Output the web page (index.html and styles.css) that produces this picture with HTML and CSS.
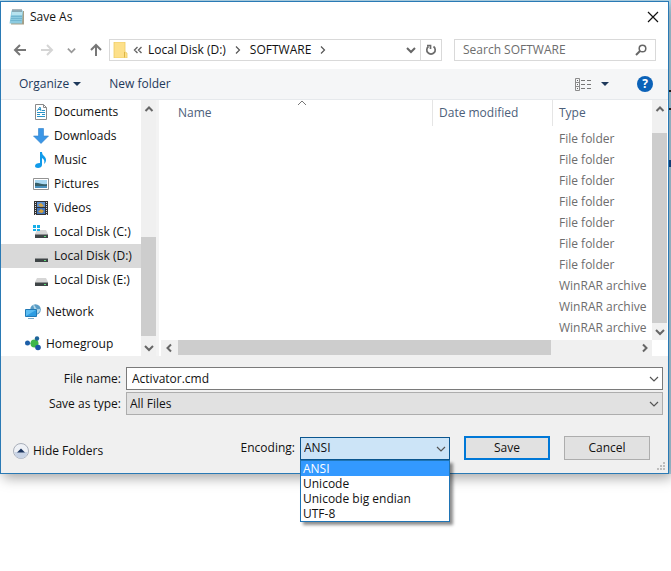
FILE: index.html
```html
<!DOCTYPE html>
<html lang="en">
<head>
    <meta charset="UTF-8">
    <meta name="viewport" content="width=device-width, initial-scale=1.0">
    <title>Save As</title>
    <link rel="stylesheet" href="styles.css">
</head>
<body>
    <!-- Shared glyphs -->
    <svg class="symbols" aria-hidden="true">
        <symbol id="chev-down" viewBox="0 0 10 10"><path d="M1 3l4 4 4-4"/></symbol>
        <symbol id="chev-up" viewBox="0 0 10 10"><path d="M1.500 7L5 3.500 8.500 7"/></symbol>
        <symbol id="chev-left" viewBox="0 0 10 10"><path d="M7 1.500L3.500 5 7 8.500"/></symbol>
        <symbol id="chev-right" viewBox="0 0 10 10"><path d="M3 1.500L6.500 5 3 8.500"/></symbol>
        <symbol id="drive" viewBox="0 0 16 16">
            <path d="M4 6h9l2 4H2z" fill="#d6d6d6"/>
            <path d="M2 10h13v4H2z" fill="#3f4547"/>
            <path d="M2 10h13v1H2z" fill="#8c8f90"/>
            <path d="M11 12h2v1h-2z" fill="#5fe07a"/>
        </symbol>
    </svg>

    <div class="desktop">
        <main class="dialog">
            <header class="titlebar">
                <svg class="icon" viewBox="0 0 16 16">
                    <path d="M3 2h12v13.500H2z" fill="#a59f87"/>
                    <path d="M2.500 1.500h11.500L13 14.500H.500z" fill="#8ccbe0"/>
                    <path d="M3 2h10.500l-.5 4H2.500z" fill="#b7e3ef"/>
                    <path d="M2 7.500h11M2 9.500h11M1.500 11.500h11" stroke="#66aec8" stroke-width=".7"/>
                    <path d="M4 0v3M6 0v3M8 0v3M10 0v3M12 0v3" stroke="#5b6f78"/>
                </svg>
                <h1>Save As</h1>
                <button class="close" aria-label="Close">
                    <svg viewBox="0 0 12 12"><path d="M1 1l10 10M11 1L1 11" stroke="#111" stroke-width="1.200"/></svg>
                </button>
            </header>

            <!-- Address row -->
            <nav class="address-row">
                <div class="nav-buttons">
                    <button aria-label="Back"><svg viewBox="0 0 14 14"><path d="M13 7H2M7 2L2 7l5 5" stroke="#777" stroke-width="2" fill="none"/></svg></button>
                    <button aria-label="Forward"><svg viewBox="0 0 14 14"><path d="M1 7h11M7 2l5 5-5 5" stroke="#d5d5d5" stroke-width="2" fill="none"/></svg></button>
                    <button class="recent" aria-label="Recent locations"><svg class="chev bold"><use href="#chev-down"/></svg></button>
                    <button aria-label="Up"><svg viewBox="0 0 14 14"><path d="M7 13V2M2 7l5-5 5 5" stroke="#777" stroke-width="2" fill="none"/></svg></button>
                </div>
                <div class="address">
                    <svg class="icon" viewBox="0 0 16 16">
                        <path d="M2 0h11v10l2 1v5H2z" fill="#fde08a" stroke="#eccb63" stroke-width=".8"/>
                        <path d="M12.500 10v5.500" stroke="#dcb545"/>
                    </svg>
                    <a class="more" href="#" aria-label="Parent folders"><svg viewBox="0 0 10 10"><path d="M4.500 2l-3 3 3 3M8.500 2l-3 3 3 3" fill="none" stroke="#666" stroke-width="1.400"/></svg></a>
                    <a href="#">Local Disk (D:)</a>
                    <svg class="chev"><use href="#chev-right"/></svg>
                    <a href="#">SOFTWARE</a>
                    <svg class="chev"><use href="#chev-right"/></svg>
                    <button class="history" aria-label="Previous locations"><svg class="chev bold"><use href="#chev-down"/></svg></button>
                    <button class="refresh" aria-label="Refresh">
                        <svg viewBox="0 0 12 12"><path d="M3.500 2.500A4.200 4.200 0 1 0 8.500 2.500M2 1.500h3.500V5" stroke="#6b6b6b" stroke-width="1.700" fill="none"/></svg>
                    </button>
                </div>
                <div class="search">
                    <input type="text" placeholder="Search SOFTWARE" aria-label="Search SOFTWARE">
                    <svg viewBox="0 0 12 12"><circle cx="7.500" cy="4.500" r="3.300" stroke="#666" stroke-width="1.500" fill="none"/><path d="M5 7l-4 4" stroke="#666" stroke-width="2"/></svg>
                </div>
            </nav>

            <div class="toolbar">
                <button>Organize <span class="caret"></span></button>
                <button>New folder</button>
                <button class="views" aria-label="Change your view">
                    <svg viewBox="0 0 17 13">
                        <path d="M.500.500h4v12h-4zM.500 4.500h4M.500 8.500h4" fill="none" stroke="#8b8b8b"/>
                        <path d="M2 2h1v1H2zM2 6h1v1H2zM2 10h1v1H2z" fill="#666"/>
                        <path d="M6 2.500h4M12 2.500h4M6 6.500h4M12 6.500h4M6 10.500h4M12 10.500h4" stroke="#777"/>
                    </svg>
                    <span class="caret"></span>
                </button>
                <button class="help" aria-label="Help">?</button>
            </div>

            <div class="panes">
                <aside class="sidebar">
                    <ul class="tree">
                        <li><a href="#">
                            <svg class="icon" viewBox="0 0 16 16"><path d="M2.500.500h8l3 3v12h-11z" fill="#fff" stroke="#8a8a8a"/><path d="M10.500.500v3h3" fill="none" stroke="#8a8a8a"/><path d="M4 7l3-4 1 4M5 5.500h3M4 8.500h8M4 10.500h3M9 10.500h3M4 12.500h8M9 6.500h3" stroke="#2a94c8" fill="none"/></svg>
                            Documents</a></li>
                        <li><a href="#">
                            <svg class="icon" viewBox="0 0 16 16"><path d="M5.500.500h5V8h5L8 15.500.500 8h5z" fill="#3b96e6" stroke="#2f7fca" stroke-width=".6"/></svg>
                            Downloads</a></li>
                        <li><a href="#">
                            <svg class="icon" viewBox="0 0 16 16"><path d="M7 0h2c0 4 4 4 4 8 0 2-1 3-2 4 1-3 0-5-2-6v7c0 2-2 3-4 3s-3-1-3-2c0-2 2-3 5-3z" fill="#119bea"/></svg>
                            Music</a></li>
                        <li><a href="#">
                            <svg class="icon" viewBox="0 0 16 16"><path d="M.500 2.500h15v11H.500z" fill="#fff" stroke="#939393"/><path d="M2 4h12v8H2z" fill="#a9d8f2"/><path d="M2 7c3-1 6 2 12 1v2H2z" fill="#37606a"/><path d="M2 10h12v2H2z" fill="#4b91bd"/></svg>
                            Pictures</a></li>
                        <li><a href="#">
                            <svg class="icon" viewBox="0 0 16 16"><path d="M1 1h14v14H1z" fill="#333"/><path d="M4 2h8v5H4z" fill="#5c8fd0"/><path d="M4 8h8v6H4z" fill="#4376bd"/><path d="M5 5l3-2 3 3-3 1zM5 12l3-3 3 2-2 2z" fill="#d5a23b"/><path d="M2.500 2v13M13.500 2v13" stroke="#ddd" stroke-dasharray="1 1"/></svg>
                            Videos</a></li>
                        <li><a href="#">
                            <svg class="icon" viewBox="0 0 16 16"><use href="#drive"/><path d="M0 1h3v3H0zM4 1h3v3H4zM0 5h3v2H0zM4 5h3v2H4z" fill="#16aee8"/></svg>
                            Local Disk (C:)</a></li>
                        <li class="selected"><a href="#"><svg class="icon"><use href="#drive"/></svg> Local Disk (D:)</a></li>
                        <li><a href="#"><svg class="icon"><use href="#drive"/></svg> Local Disk (E:)</a></li>
                        <li class="root"><a href="#">
                            <svg class="icon" viewBox="0 0 16 16"><circle cx="10.500" cy="5.500" r="5.300" fill="#5a9cc5"/><path d="M8 1c3 0 2 3 4 4s3-1 3 1-3 4-4 4" fill="#b5d9e9"/><path d="M.500 5.500h11v7H.500z" fill="#5bbdf2" stroke="#2179b5"/><path d="M1 12l10-6v6z" fill="#2e9de2"/><path d="M3 14.500h6" stroke="#7aaac6"/></svg>
                            Network</a></li>
                        <li class="root"><a href="#">
                            <svg class="icon" viewBox="0 0 16 16"><path d="M3 7l8 1 1-5M11 8l2 4" stroke="#7cb6cf" fill="none"/><circle cx="2.500" cy="7" r="2.500" fill="#1d5fa8"/><circle cx="9.500" cy="7.500" r="4" fill="#3eb649"/><circle cx="12" cy="2.500" r="2.200" fill="#1d6499"/><circle cx="13" cy="11.500" r="2.800" fill="#1b57a5"/></svg>
                            Homegroup</a></li>
                    </ul>
                    <div class="scroll-v">
                        <button aria-label="Scroll up"><svg class="chev bold"><use href="#chev-up"/></svg></button>
                        <div class="track low"><div class="thumb"></div></div>
                        <button aria-label="Scroll down"><svg class="chev bold"><use href="#chev-down"/></svg></button>
                    </div>
                </aside>

                <section class="files">
                    <div class="files-main">
                        <div class="list">
                            <table>
                                <thead>
                                    <tr>
                                        <th class="col-name"><span>Name</span><svg class="sort" viewBox="0 0 10 6"><path d="M1 5l4-4 4 4" fill="none" stroke="#777"/></svg></th>
                                        <th class="col-date"><span>Date modified</span></th>
                                        <th class="col-type"><span>Type</span></th>
                                    </tr>
                                </thead>
                                <tbody>
                                    <tr><td></td><td></td><td>File folder</td></tr>
                                    <tr><td></td><td></td><td>File folder</td></tr>
                                    <tr><td></td><td></td><td>File folder</td></tr>
                                    <tr><td></td><td></td><td>File folder</td></tr>
                                    <tr><td></td><td></td><td>File folder</td></tr>
                                    <tr><td></td><td></td><td>File folder</td></tr>
                                    <tr><td></td><td></td><td>File folder</td></tr>
                                    <tr><td></td><td></td><td>WinRAR archive</td></tr>
                                    <tr><td></td><td></td><td>WinRAR archive</td></tr>
                                    <tr><td></td><td></td><td>WinRAR archive</td></tr>
                                </tbody>
                            </table>
                        </div>
                        <div class="scroll-v">
                            <button aria-label="Scroll up"><svg class="chev bold"><use href="#chev-up"/></svg></button>
                            <div class="track full"><div class="thumb"></div></div>
                            <button aria-label="Scroll down"><svg class="chev bold"><use href="#chev-down"/></svg></button>
                        </div>
                    </div>
                    <div class="scroll-h">
                        <button aria-label="Scroll left"><svg class="chev bold"><use href="#chev-left"/></svg></button>
                        <div class="track"><div class="thumb"></div></div>
                        <button aria-label="Scroll right"><svg class="chev bold"><use href="#chev-right"/></svg></button>
                    </div>
                </section>
            </div>

            <!-- File name, type and encoding -->
            <form class="details">
                <div class="fields">
                    <label for="filename">File name:</label>
                    <div class="combo">
                        <input type="text" id="filename" value="Activator.cmd">
                        <svg class="chev"><use href="#chev-down"/></svg>
                    </div>
                    <label for="filetype">Save as type:</label>
                    <div class="combo">
                        <select id="filetype"><option>All Files</option></select>
                        <svg class="chev"><use href="#chev-down"/></svg>
                    </div>
                </div>
                <div class="actions">
                    <button type="button" class="hide-folders">
                        <svg viewBox="0 0 18 18">
                            <circle cx="9" cy="9" r="7.500" fill="#eef1f6" stroke="#a9afba"/>
                            <path d="M2.500 10a6.500 6.500 0 0 0 13 0z" fill="#c8d3e5"/>
                            <path d="M5 10.500l4-4 4 4z" fill="#1c355e"/>
                        </svg>
                        Hide Folders
                    </button>
                    <label for="encoding">Encoding:</label>
                    <div class="combo encoding">
                        <select id="encoding">
                            <option>ANSI</option>
                            <option>Unicode</option>
                            <option>Unicode big endian</option>
                            <option>UTF-8</option>
                        </select>
                        <svg class="chev"><use href="#chev-down"/></svg>
                        <ul class="options" role="listbox" aria-label="Encoding">
                            <li role="option" aria-selected="true">ANSI</li>
                            <li role="option">Unicode</li>
                            <li role="option">Unicode big endian</li>
                            <li role="option">UTF-8</li>
                        </ul>
                    </div>
                    <button type="button" class="btn primary">Save</button>
                    <button type="button" class="btn">Cancel</button>
                </div>
                <svg class="grip" viewBox="0 0 8 8"><path d="M6 0h2v2H6zM3 3h2v2H3zM6 3h2v2H6zM0 6h2v2H0zM3 6h2v2H3zM6 6h2v2H6z" fill="#bdbdbd"/></svg>
            </form>
        </main>
    </div>
</body>
</html>
```
FILE: styles.css
```css
* {
    margin: 0;
    padding: 0;
    box-sizing: border-box;
}

body {
    min-height: 100vh;
    font-family: "Segoe UI", "Open Sans", "Noto Sans", sans-serif;
    font-size: 12px;
    line-height: 16px;
    color: #111;
    background-color: #fff;
}

button, input, select {
    font: inherit;
    color: inherit;
    border: none;
    background: none;
    outline: none;
}

a {
    color: inherit;
    text-decoration: none;
}

ul {
    list-style: none;
}

svg {
    display: block;
    flex: none;
}

.symbols {
    position: absolute;
    width: 0;
    height: 0;
}

.icon {
    width: 16px;
    height: 16px;
}

.chev {
    width: 10px;
    height: 10px;
    fill: none;
    stroke: #555;
    stroke-width: 1.2;
}

.chev.bold {
    stroke: #666;
    stroke-width: 2;
}

/* Window behind the dialog */
.desktop {
    padding: 1px 2px 0 0;
    background:
        linear-gradient(#222, #222) right 90px / 2px 2px no-repeat,
        linear-gradient(#222, #222) right 108px / 2px 2px no-repeat,
        linear-gradient(#174f94, #174f94) right 160px / 2px 7px no-repeat,
        #b5dcef;
}

.dialog {
    background: #fff;
    border: 1px solid #2a7ab5;
    box-shadow: 3px 4px 12px rgba(0, 0, 0, 0.35);
}

.titlebar {
    display: flex;
    align-items: center;
    height: 29px;
    padding: 0 9px 0 8px;
    gap: 5px;
}

.titlebar h1 {
    font-size: 12px;
    font-weight: normal;
}

.close {
    margin-left: auto;
}

.close svg {
    width: 12px;
    height: 12px;
}

/* Address row */
.address-row {
    display: flex;
    align-items: center;
    height: 38px;
    padding: 0 12px;
    gap: 12px;
}

.nav-buttons {
    display: flex;
    align-items: center;
    justify-content: space-between;
    width: 90px;
    flex: none;
    margin-right: -6px;
}

.nav-buttons svg {
    width: 14px;
    height: 14px;
}

.nav-buttons .recent svg {
    width: 9px;
    height: 9px;
    stroke: #999;
}

.address, .search {
    display: flex;
    align-items: center;
    height: 22px;
    border: 1px solid #d9d9d9;
}

.address {
    flex: 1;
    gap: 7px;
    padding-left: 2px;
    white-space: nowrap;
}

.more {
    margin: 0 -2px;
}

.more svg {
    width: 10px;
    height: 10px;
}

.history {
    margin-left: auto;
}

.refresh {
    height: 20px;
    padding: 0 4px;
    margin-left: -3px;
    border-left: 1px solid #d9d9d9;
}

.refresh svg {
    width: 12px;
    height: 12px;
}

.search {
    width: 202px;
    padding: 0 8px;
}

.search input {
    flex: 1;
    min-width: 0;
}

.search input::placeholder {
    color: #6d6d6d;
    opacity: 1;
}

.search svg {
    width: 12px;
    height: 12px;
}

.toolbar {
    display: flex;
    align-items: center;
    height: 31px;
    padding: 0 15px 0 18px;
    gap: 28px;
    color: #1e395b;
    background: #f5f6f7;
    border-bottom: 1px solid #e6e9ec;
}

.toolbar button {
    display: flex;
    align-items: center;
    gap: 4px;
}

.caret {
    border: 4px solid transparent;
    border-top-color: #1e395b;
    border-bottom: none;
}

.toolbar .views {
    margin-left: auto;
    gap: 9px;
}

.views svg {
    width: 17px;
    height: 13px;
}

.toolbar .help {
    justify-content: center;
    width: 16px;
    height: 16px;
    border-radius: 50%;
    color: #fff;
    font-weight: bold;
    background: #0b62b8;
}

/* Folder tree and file list */
.panes {
    display: flex;
}

.sidebar {
    display: flex;
    width: 158px;
    flex: none;
    border-right: 3px solid #f3f3f3;
}

.tree {
    flex: 1;
}

.tree a {
    display: flex;
    align-items: center;
    gap: 5px;
    height: 24px;
    padding-left: 32px;
    white-space: nowrap;
}

.tree .root {
    padding-top: 8px;
}

.tree .root a {
    padding-left: 24px;
}

.tree .selected {
    background: #d9d9d9;
}

.scroll-v, .scroll-h {
    display: flex;
    background: #f0f0f0;
}

.scroll-v {
    flex-direction: column;
    width: 15px;
}

.scroll-v button, .scroll-h button {
    display: flex;
    align-items: center;
    justify-content: center;
    width: 15px;
    height: 17px;
}

.scroll-v .track, .scroll-h .track {
    display: flex;
    flex: 1;
}

.track.low {
    align-items: flex-end;
    padding-bottom: 3px;
}

.thumb {
    width: 100%;
    background: #cdcdcd;
}

.low .thumb {
    height: 45%;
}

.full {
    padding-top: 16px;
}

.files {
    flex: 1;
    min-width: 0;
    padding: 0 1px 0 2px;
}

.files-main {
    display: flex;
}

.list {
    flex: 1;
    padding-bottom: 2px;
}

.scroll-h {
    height: 16px;
    margin-right: 15px;
}

.scroll-h button {
    height: 16px;
}

.scroll-h .thumb {
    width: 81%;
    margin: 0 0 1px 2px;
}

table {
    width: 100%;
    table-layout: fixed;
    border-collapse: collapse;
    color: #6d6d6d;
}

th {
    position: relative;
    height: 28px;
    padding: 0 0 2px;
    font-weight: normal;
    text-align: left;
    color: #4c607a;
}

th span {
    display: block;
    padding: 5px 0 5px 6px;
    border-left: 1px solid #e5e5e5;
}

.col-name span {
    padding-left: 16px;
    border-left-color: transparent;
}

.col-date {
    width: 120px;
}

.col-type {
    width: 100px;
}

.sort {
    position: absolute;
    top: 0;
    left: 50%;
    width: 10px;
    height: 6px;
}

td {
    height: 21px;
    padding-left: 7px;
    white-space: nowrap;
}

/* Bottom form */
.details {
    position: relative;
    padding: 11px 5px 13px 11px;
    background: #f0f0f0;
}

.fields {
    display: grid;
    grid-template-columns: 109px 1fr;
    gap: 2px 5px;
    align-items: center;
}

.fields label {
    text-align: right;
}

.combo {
    position: relative;
}

.combo input, .combo select {
    display: block;
    width: 100%;
    height: 23px;
    padding: 0 20px 0 5px;
    border: 1px solid #7a7a7a;
    background: #fff;
}

.combo select {
    appearance: none;
    padding-left: 3px;
    border-color: #adadad;
    background: #e1e1e1;
}

.combo .chev {
    position: absolute;
    top: 7px;
    right: 4px;
    pointer-events: none;
}

.actions {
    display: flex;
    align-items: center;
    gap: 14px;
    padding: 21px 13px 0 0;
}

.actions label {
    margin-right: -9px;
}

.hide-folders {
    display: flex;
    align-items: center;
    gap: 3px;
    margin-right: auto;
    padding-top: 5px;
}

.hide-folders svg {
    width: 18px;
    height: 18px;
}

.encoding {
    width: 150px;
}

.combo.encoding select {
    border-color: #0b568f;
    background: #cce4f7;
}

.options {
    position: absolute;
    top: 100%;
    left: 0;
    right: 0;
    z-index: 1;
    border: 1px solid #1f74b5;
    line-height: 15px;
    background: #fff;
    box-shadow: 3px 3px 3px rgba(0, 0, 0, 0.45);
}

.options li {
    padding-left: 2px;
}

.options li[aria-selected="true"] {
    color: #fff;
    background: #3399ff;
}

.btn {
    width: 86px;
    height: 24px;
    border: 1px solid #adadad;
    background: #e1e1e1;
}

.btn.primary {
    border: 2px solid #0078d7;
}

.grip {
    position: absolute;
    right: 3px;
    bottom: 3px;
    width: 8px;
    height: 8px;
}
```
